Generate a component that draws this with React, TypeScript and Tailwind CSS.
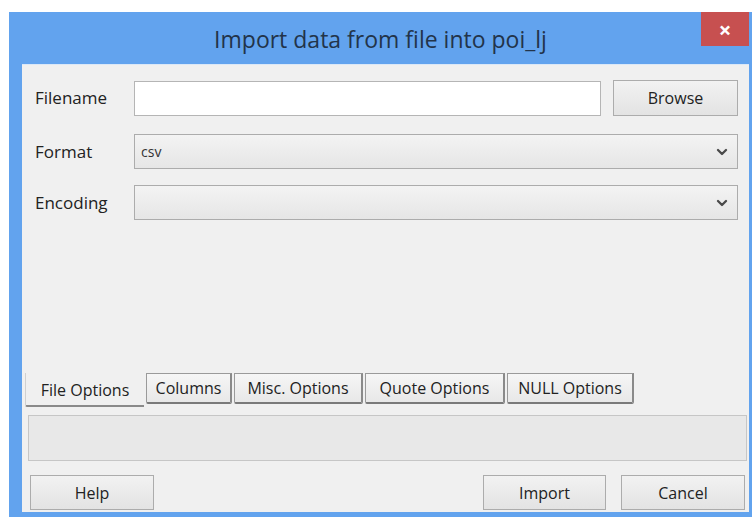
import { ChevronDown } from 'lucide-react'

const font = { fontFamily: '"Open Sans", "Noto Sans", "Liberation Sans", sans-serif' }

function Chevron() {
  return <ChevronDown className="w-[16px] h-[16px] text-[#4a4a4a]" strokeWidth={3.5} />
}

function Select({ value }: { value?: string }) {
  return (
    <div className="flex-1 h-[35px] flex items-center justify-between pl-[6px] pr-[7px] border border-[#acacac] bg-gradient-to-b from-[#f3f3f3] to-[#e6e6e6] text-[14px] text-[#333]">
      <span>{value}</span>
      <Chevron />
    </div>
  )
}

function Button({ label, className }: { label: string; className?: string }) {
  return (
    <div className={`h-[35px] flex items-center justify-center border border-[#acacac] bg-gradient-to-b from-[#f2f2f2] to-[#e3e3e3] text-[16px] text-[#222] ${className ?? ''}`}>
      {label}
    </div>
  )
}

const tabs = [
  { label: 'Columns', w: 'w-[86px]' },
  { label: 'Misc. Options', w: 'w-[129px]' },
  { label: 'Quote Options', w: 'w-[140px]' },
  { label: 'NULL Options', w: 'w-[127px]' },
]

export default function App() {
  return (
    <div className="w-[752px] h-[519px] bg-white overflow-hidden pt-[12px] pl-[9px]" style={font}>
      {/* Window frame */}
      <div className="w-[743px] h-[505px] bg-[#62a3ee] flex flex-col">
        {/* Title bar */}
        <div className="h-[52px] relative flex items-center justify-center pt-[2px]">
          <span className="text-[23px] text-[#22344a]">Import data from file into poi_lj</span>
          <div className="absolute top-0 right-[3px] w-[48px] h-[34px] bg-[#c75050] flex items-center justify-center text-white text-[22px] font-bold leading-none">
            ×
          </div>
        </div>

        {/* Client area */}
        <div className="flex-1 ml-[13px] mr-[3px] mb-[5px] bg-[#f0f0f0] flex flex-col text-[#222] border-t border-[#dbe8f7]">
          <div className="pl-[13px] pr-[11px] pt-[15px] flex flex-col">
            <div className="flex items-center">
              <div className="w-[99px] text-[17px]">Filename</div>
              <div className="flex-1 h-[35px] bg-white border border-[#b5b5b5]" />
              <Button label="Browse" className="w-[125px] ml-[12px] h-[36px]" />
            </div>
            <div className="flex items-center mt-[18px]">
              <div className="w-[99px] text-[17px]">Format</div>
              <Select value="csv" />
            </div>
            <div className="flex items-center mt-[16px]">
              <div className="w-[99px] text-[17px]">Encoding</div>
              <Select />
            </div>
          </div>

          {/* Tab bar */}
          <div className="mt-[153px] flex items-start pl-[3px] h-[34px] text-[16px]">
            <div className="w-[119px] h-[34px] flex items-end justify-center pb-[3px] border-l border-b-2 border-l-[#d0d0d0] border-b-[#8a8a8a] rounded-bl-[2px]">
              File Options
            </div>
            {tabs.map((t) => (
              <div
                key={t.label}
                className={`${t.w} h-[31px] flex items-center justify-center border border-[#9a9a9a] border-b-2 border-r-2 border-b-[#7a7a7a] border-r-[#8a8a8a] bg-gradient-to-b from-[#f6f6f6] to-[#e8e8e8] rounded-b-[2px] ml-[2px]`}
              >
                {t.label}
              </div>
            ))}
          </div>

          {/* Tab pane */}
          <div className="mt-[8px] mx-[6px] h-[46px] bg-[#e8e8e8] border border-[#c6c6c6] mr-[2px]" />

          {/* Buttons */}
          <div className="mt-[14px] flex items-center pl-[8px] pr-[4px]">
            <Button label="Help" className="w-[124px]" />
            <div className="flex-1" />
            <Button label="Import" className="w-[123px]" />
            <Button label="Cancel" className="w-[124px] ml-[15px]" />
          </div>
        </div>
      </div>
    </div>
  )
}
